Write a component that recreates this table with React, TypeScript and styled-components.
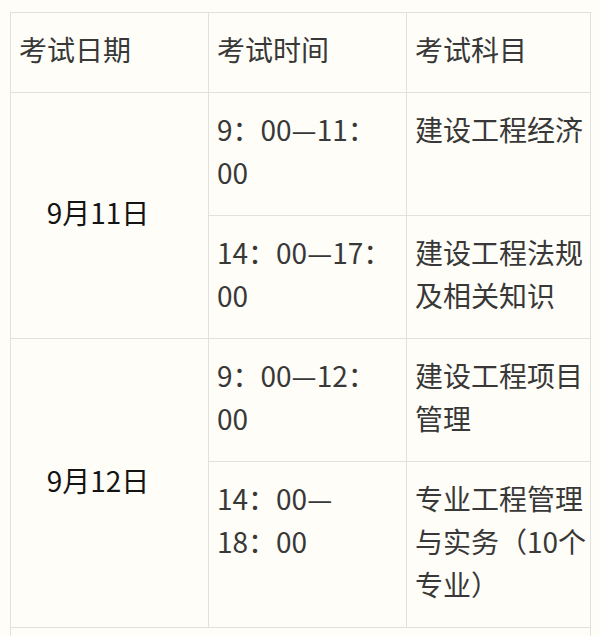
import React from 'react'
import styled, { createGlobalStyle } from 'styled-components'

const GlobalStyle = createGlobalStyle`
  html, body {
    margin: 0;
    padding: 0;
    background: #fefdf7;
  }
  body {
    font-family: "Noto Sans CJK SC", "Noto Sans", sans-serif;
  }
`

const Page = styled.div`
  width: 600px;
  height: 636px;
  overflow: hidden;
  padding: 12px 0 0 10px;
  box-sizing: border-box;
  background: #fefdf7;
`

const Table = styled.table`
  border-collapse: collapse;
  table-layout: fixed;
  width: 580px;
  font-size: 28px;
  line-height: 43px;
  color: #383838;
`

const Cell = styled.td<{ $center?: boolean; $dark?: boolean }>`
  border: 1px solid #e1e1df;
  padding: 15px 10px 21px 8px;
  vertical-align: top;
  white-space: nowrap;
  text-align: left;
  ${p => p.$center && `
    vertical-align: middle;
    text-align: center;
    padding-left: 10px;
    padding-right: 33px;
  `}
  ${p => p.$dark && `color: #141414;`}
`

const HeadCell = styled(Cell).attrs({ as: 'th' })`
  font-weight: normal;
`

const NoteRow = styled.tr`
  height: 60px;
`

type Session = { time: string[]; subject: string[] }
type Day = { date: string; sessions: Session[] }

const days: Day[] = [
  {
    date: '9月11日',
    sessions: [
      { time: ['9：00—11：', '00'], subject: ['建设工程经济'] },
      { time: ['14：00—17：', '00'], subject: ['建设工程法规', '及相关知识'] },
    ],
  },
  {
    date: '9月12日',
    sessions: [
      { time: ['9：00—12：', '00'], subject: ['建设工程项目', '管理'] },
      { time: ['14：00—', '18：00'], subject: ['专业工程管理', '与实务（10个', '专业）'] },
    ],
  },
]

const Lines = ({ lines }: { lines: string[] }) => (
  <>
    {lines.map((l, i) => (
      <React.Fragment key={i}>
        {i > 0 && <br />}
        {l}
      </React.Fragment>
    ))}
  </>
)

export default function App() {
  return (
    <Page>
      <GlobalStyle />
      <Table>
        <colgroup>
          <col style={{ width: 198 }} />
          <col style={{ width: 198 }} />
          <col style={{ width: 184 }} />
        </colgroup>
        <thead>
          <tr>
            <HeadCell>考试日期</HeadCell>
            <HeadCell>考试时间</HeadCell>
            <HeadCell>考试科目</HeadCell>
          </tr>
        </thead>
        <tbody>
          {days.map(day =>
            day.sessions.map((s, i) => (
              <tr key={day.date + i}>
                {i === 0 && (
                  <Cell rowSpan={day.sessions.length} $center $dark>
                    {day.date}
                  </Cell>
                )}
                <Cell>
                  <Lines lines={s.time} />
                </Cell>
                <Cell>
                  <Lines lines={s.subject} />
                </Cell>
              </tr>
            ))
          )}
          <NoteRow>
            <Cell colSpan={3} />
          </NoteRow>
        </tbody>
      </Table>
    </Page>
  )
}
